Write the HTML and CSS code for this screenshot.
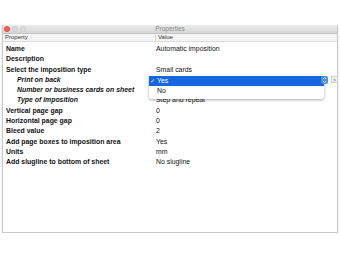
FILE: index.html
```html
<!DOCTYPE html>
<html>
<head>
<meta charset="utf-8">
<link rel="stylesheet" href="styles.css">
</head>
<body>
<div class="window">
  <div class="titlebar">
    <div class="lights">
      <span class="light red"></span>
      <span class="light"></span>
      <span class="light"></span>
    </div>
    <div class="title">Properties</div>
  </div>
  <div class="header">
    <div class="hcell first">Property</div>
    <div class="hcell">Value</div>
  </div>
  <div class="rows">
    <div class="row"><div class="key">Name</div><div class="val">Automatic imposition</div></div>
    <div class="row"><div class="key">Description</div><div class="val"></div></div>
    <div class="row"><div class="key">Select the imposition type</div><div class="val">Small cards</div></div>
    <div class="row"><div class="key sub">Print on back</div><div class="val"></div></div>
    <div class="row"><div class="key sub">Number or business cards on sheet</div><div class="val"></div></div>
    <div class="row"><div class="key sub">Type of imposition</div><div class="val">Step and repeat</div></div>
    <div class="row"><div class="key">Vertical page gap</div><div class="val">0</div></div>
    <div class="row"><div class="key">Horizontal page gap</div><div class="val">0</div></div>
    <div class="row"><div class="key">Bleed value</div><div class="val">2</div></div>
    <div class="row"><div class="key">Add page boxes to imposition area</div><div class="val">Yes</div></div>
    <div class="row"><div class="key">Units</div><div class="val">mm</div></div>
    <div class="row"><div class="key">Add slugline to bottom of sheet</div><div class="val">No slugline</div></div>
  </div>
  <div class="menu">
    <div class="item selected"><span class="check">✓</span>Yes</div>
    <div class="item"><span class="check"></span>No</div>
  </div>
  <div class="stepper">
    <svg width="7" height="8" viewBox="0 0 7 8"><path d="M2 3 L3.5 1.5 L5 3 M2 5 L3.5 6.5 L5 5" fill="none" stroke="#fff" stroke-width="0.8"/></svg>
  </div>
  <div class="more">&gt;</div>
</div>
</body>
</html>
```
FILE: styles.css
```css
html, body {
  margin: 0;
  padding: 0;
  background: #fff;
}
body {
  padding: 25px 2px 0 2px;
  font-family: "Liberation Sans", Arial, sans-serif;
}
.window {
  position: relative;
  width: 336px;
  height: 208px;
  box-sizing: border-box;
  border: 1px solid #c9c9c9;
  border-top: none;
  box-shadow: 0 1px 2px rgba(0,0,0,0.15);
  background: #fff;
  display: flex;
  flex-direction: column;
}
.titlebar {
  height: 8px;
  background: linear-gradient(#ececec, #d6d6d6);
  border-bottom: 1px solid #c4c4c4;
  display: flex;
  align-items: center;
  position: relative;
}
.lights {
  display: flex;
  gap: 2px;
  padding-left: 1px;
}
.light {
  width: 6px;
  height: 6px;
  border-radius: 50%;
  background: #dcdcdc;
  box-sizing: border-box;
  border: 1px solid #cdcdcd;
}
.light.red {
  background: #fc5f57;
  border-color: #e5473f;
}
.title {
  position: absolute;
  left: 0;
  right: 0;
  text-align: center;
  font-size: 6.5px;
  color: #8a8a8a;
  line-height: 8px;
}
.header {
  display: flex;
  height: 7px;
  background: #f4f4f4;
  border-bottom: 1px solid #dcdcdc;
  font-size: 6px;
  color: #333;
  line-height: 7px;
}
.hcell {
  padding-left: 2px;
}
.hcell.first {
  width: 150px;
  border-right: 1px solid #dcdcdc;
}
.rows {
  padding-top: 2px;
  display: flex;
  flex-direction: column;
}
.row {
  display: flex;
  height: 10.3px;
  line-height: 10.3px;
  font-size: 6.9px;
  color: #111;
}
.key {
  width: 151px;
  padding-left: 3px;
  box-sizing: border-box;
  font-weight: bold;
  white-space: nowrap;
}
.key.sub {
  padding-left: 14px;
  font-style: italic;
}
.val {
  padding-left: 2px;
  white-space: nowrap;
}
.menu {
  position: absolute;
  left: 146px;
  top: 50px;
  width: 175px;
  background: #fff;
  border-radius: 3px;
  box-shadow: 0 1px 3px rgba(0,0,0,0.35);
  padding: 1px 0 3px;
}
.item {
  height: 10px;
  line-height: 10px;
  font-size: 6.9px;
  color: #111;
  display: flex;
}
.item.selected {
  background: #1566e0;
  color: #fff;
}
.check {
  width: 7px;
  padding-left: 1px;
  font-size: 6px;
}
.stepper {
  position: absolute;
  left: 318px;
  top: 51px;
  width: 7px;
  height: 8px;
  background: #4d8fea;
  border-radius: 2px;
  display: flex;
}
.more {
  position: absolute;
  left: 328px;
  top: 51px;
  width: 7px;
  height: 7px;
  background: #f0f0f0;
  border: 1px solid #d2d2d2;
  box-sizing: border-box;
  font-size: 5px;
  line-height: 6px;
  text-align: center;
  color: #555;
}
```
